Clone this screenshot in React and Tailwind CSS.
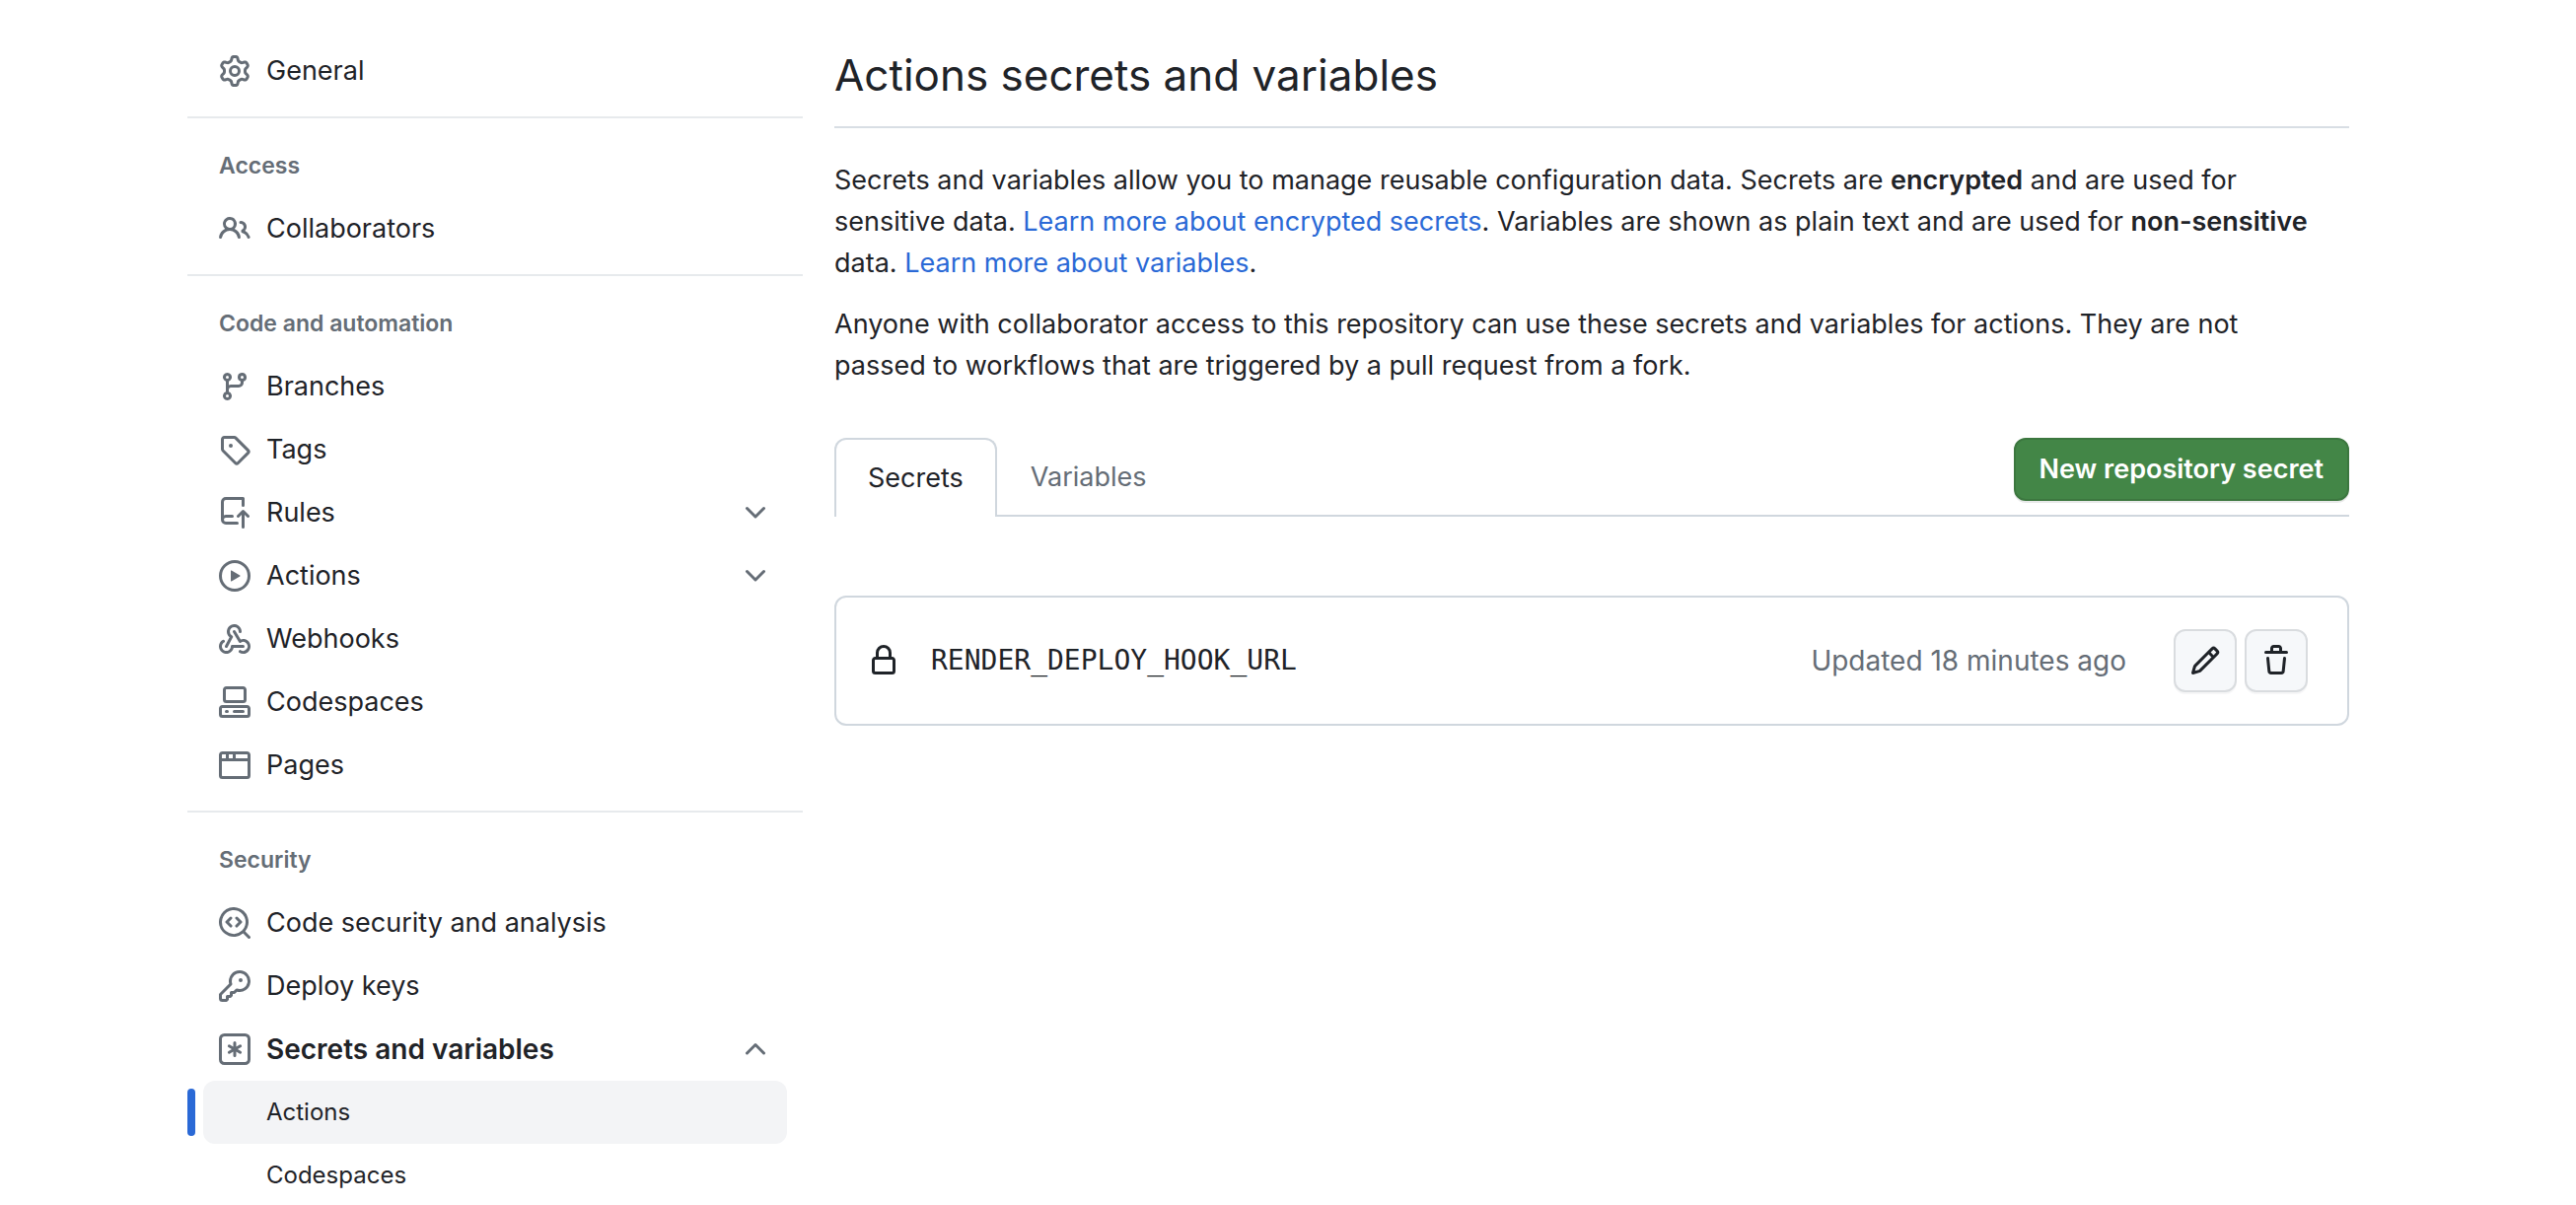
import React, { useState } from 'react';
import clsx from 'clsx';

const ICONS = {
    gear: 'M8 0a8.2 8.2 0 0 1 .701.031C9.444.095 9.99.645 10.16 1.29l.288 1.107c.018.066.079.158.212.224.231.114.454.243.668.386.123.082.233.09.299.071l1.103-.303c.644-.176 1.392.021 1.82.63.27.385.506.792.704 1.218.315.675.111 1.422-.364 1.891l-.814.806c-.049.048-.098.147-.088.294.016.257.016.515 0 .772-.01.147.038.246.088.294l.814.806c.475.469.679 1.216.364 1.891a7.977 7.977 0 0 1-.704 1.217c-.428.61-1.176.807-1.82.63l-1.102-.302c-.067-.019-.177-.011-.3.071a5.909 5.909 0 0 1-.668.386c-.133.066-.194.158-.211.224l-.29 1.106c-.168.646-.715 1.196-1.458 1.26a8.006 8.006 0 0 1-1.402 0c-.743-.064-1.289-.614-1.458-1.26l-.289-1.106c-.018-.066-.079-.158-.212-.224a5.738 5.738 0 0 1-.668-.386c-.123-.082-.233-.09-.299-.071l-1.103.303c-.644.176-1.392-.021-1.82-.63a8.12 8.12 0 0 1-.704-1.218c-.315-.675-.111-1.422.363-1.891l.815-.806c.05-.048.098-.147.088-.294a6.214 6.214 0 0 1 0-.772c.01-.147-.038-.246-.088-.294l-.815-.806C.635 6.045.431 5.298.746 4.623a7.92 7.92 0 0 1 .704-1.217c.428-.61 1.176-.807 1.82-.63l1.102.302c.067.019.177.011.3-.071.214-.143.437-.272.668-.386.133-.066.194-.158.211-.224l.29-1.106C6.009.645 6.556.095 7.299.03 7.53.01 7.764 0 8 0Zm-.571 1.525c-.036.003-.108.036-.137.146l-.289 1.105c-.147.561-.549.967-.998 1.189-.173.086-.34.183-.5.29-.417.278-.97.423-1.529.27l-1.103-.303c-.109-.03-.175.016-.195.045-.22.312-.412.644-.573.99-.014.031-.021.11.059.19l.815.806c.411.406.562.957.53 1.456a4.709 4.709 0 0 0 0 .582c.032.499-.119 1.05-.53 1.456l-.815.806c-.081.08-.073.159-.059.19.162.346.353.677.573.989.02.03.085.076.195.046l1.102-.303c.56-.153 1.113-.008 1.53.27.161.107.328.204.501.29.447.222.85.629.997 1.189l.289 1.105c.029.109.101.143.137.146a6.6 6.6 0 0 0 1.142 0c.036-.003.108-.036.137-.146l.289-1.105c.147-.561.549-.967.998-1.189.173-.086.34-.183.5-.29.417-.278.97-.423 1.529-.27l1.103.303c.109.029.175-.016.195-.045.22-.313.411-.644.573-.99.014-.031.021-.11-.059-.19l-.815-.806c-.411-.406-.562-.957-.53-1.456a4.709 4.709 0 0 0 0-.582c-.032-.499.119-1.05.53-1.456l.815-.806c.081-.08.073-.159.059-.19a6.464 6.464 0 0 0-.573-.989c-.02-.03-.085-.076-.195-.046l-1.102.303c-.56.153-1.113.008-1.53-.27a4.44 4.44 0 0 0-.501-.29c-.447-.222-.85-.629-.997-1.189l-.289-1.105c-.029-.11-.101-.143-.137-.146a6.6 6.6 0 0 0-1.142 0ZM11 8a3 3 0 1 1-6 0 3 3 0 0 1 6 0ZM9.5 8a1.5 1.5 0 1 0-3.001.001A1.5 1.5 0 0 0 9.5 8Z',
    people: 'M2 5.5a3.5 3.5 0 1 1 5.898 2.549 5.508 5.508 0 0 1 3.034 4.084.75.75 0 1 1-1.482.235 4 4 0 0 0-7.9 0 .75.75 0 0 1-1.482-.236A5.507 5.507 0 0 1 3.102 8.05 3.493 3.493 0 0 1 2 5.5ZM11 4a3.001 3.001 0 0 1 2.22 5.018 5.01 5.01 0 0 1 2.56 3.012.749.749 0 0 1-.885.954.752.752 0 0 1-.549-.514 3.507 3.507 0 0 0-2.522-2.372.75.75 0 0 1-.574-.73v-.352a.75.75 0 0 1 .416-.672A1.5 1.5 0 0 0 11 5.5.75.75 0 0 1 11 4Zm-5.5-.5a2 2 0 1 0-.001 3.999A2 2 0 0 0 5.5 3.5Z',
    branch: 'M9.5 3.25a2.25 2.25 0 1 1 3 2.122V6A2.5 2.5 0 0 1 10 8.5H6a1 1 0 0 0-1 1v1.128a2.251 2.251 0 1 1-1.5 0V5.372a2.25 2.25 0 1 1 1.5 0v1.836A2.493 2.493 0 0 1 6 7h4a1 1 0 0 0 1-1v-.628A2.25 2.25 0 0 1 9.5 3.25Zm-6 0a.75.75 0 1 0 1.5 0 .75.75 0 0 0-1.5 0Zm8.25-.75a.75.75 0 1 0 0 1.5.75.75 0 0 0 0-1.5ZM4.25 12a.75.75 0 1 0 0 1.5.75.75 0 0 0 0-1.5Z',
    tag: 'M1 7.775V2.75C1 1.784 1.784 1 2.75 1h5.025c.464 0 .91.184 1.238.513l6.25 6.25a1.75 1.75 0 0 1 0 2.474l-5.026 5.026a1.75 1.75 0 0 1-2.474 0l-6.25-6.25A1.752 1.752 0 0 1 1 7.775Zm1.5 0c0 .066.026.13.073.177l6.25 6.25a.25.25 0 0 0 .354 0l5.025-5.025a.25.25 0 0 0 0-.354l-6.25-6.25a.25.25 0 0 0-.177-.073H2.75a.25.25 0 0 0-.25.25ZM6 5a1 1 0 1 1 0 2 1 1 0 0 1 0-2Z',
    repoPush: 'M1 2.5A2.5 2.5 0 0 1 3.5 0h8.75a.75.75 0 0 1 .75.75v3.5a.75.75 0 0 1-1.5 0V1.5h-8a1 1 0 0 0-1 1v6.708A2.493 2.493 0 0 1 3.5 9h3.25a.75.75 0 0 1 0 1.5H3.5a1 1 0 0 0 0 2h5.75a.75.75 0 0 1 0 1.5H3.5A2.5 2.5 0 0 1 1 11.5ZM11.5 9.06l-1.22 1.22a.75.75 0 0 1-1.06-1.06l2.5-2.5a.75.75 0 0 1 1.06 0l2.5 2.5a.75.75 0 0 1-1.06 1.06L13 9.06v6.19a.75.75 0 0 1-1.5 0Z',
    play: 'M8 0a8 8 0 1 1 0 16A8 8 0 0 1 8 0ZM1.5 8a6.5 6.5 0 1 0 13 0 6.5 6.5 0 0 0-13 0Zm4.879-2.773 4.264 2.559a.25.25 0 0 1 0 .428l-4.264 2.559A.25.25 0 0 1 6 10.559V5.442a.25.25 0 0 1 .379-.215Z',
    webhook: 'M5.5 4.25a2.25 2.25 0 0 1 4.5 0 .75.75 0 0 0 1.5 0 3.75 3.75 0 1 0-6.14 2.889l-2.272 4.258a.75.75 0 0 0 1.324.706L7 7.25a.75.75 0 0 0-.309-1.015A2.25 2.25 0 0 1 5.5 4.25ZM7.364 3.607a.75.75 0 0 1 1.03.257l2.608 4.349a3.75 3.75 0 1 1-.628 6.785.75.75 0 0 1 .752-1.299 2.25 2.25 0 1 0-.033-3.88.75.75 0 0 1-1.03-.256L7.107 4.636a.75.75 0 0 1 .257-1.03ZM2.9 8.776A.75.75 0 0 1 2.625 9.8 2.25 2.25 0 1 0 6 11.75a.75.75 0 0 1 .75-.751h5.5a.75.75 0 0 1 0 1.5H7.425a3.751 3.751 0 1 1-5.55-3.998.75.75 0 0 1 1.024.274Z',
    codespaces: 'M0 11.25c0-.966.784-1.75 1.75-1.75h12.5c.966 0 1.75.784 1.75 1.75v3A1.75 1.75 0 0 1 14.25 16H1.75A1.75 1.75 0 0 1 0 14.25Zm2-9.5C2 .784 2.784 0 3.75 0h8.5C13.216 0 14 .784 14 1.75v5a1.75 1.75 0 0 1-1.75 1.75h-8.5A1.75 1.75 0 0 1 2 6.75Zm1.75-.25a.25.25 0 0 0-.25.25v5c0 .138.112.25.25.25h8.5a.25.25 0 0 0 .25-.25v-5a.25.25 0 0 0-.25-.25Zm-2 9.5a.25.25 0 0 0-.25.25v3c0 .138.112.25.25.25h12.5a.25.25 0 0 0 .25-.25v-3a.25.25 0 0 0-.25-.25ZM7 12.75a.75.75 0 0 1 .75-.75h4.5a.75.75 0 0 1 0 1.5h-4.5a.75.75 0 0 1-.75-.75Zm-4 0a.75.75 0 0 1 .75-.75h.5a.75.75 0 0 1 0 1.5h-.5a.75.75 0 0 1-.75-.75Z',
    browser: 'M0 2.75C0 1.784.784 1 1.75 1h12.5c.966 0 1.75.784 1.75 1.75v10.5A1.75 1.75 0 0 1 14.25 15H1.75A1.75 1.75 0 0 1 0 13.25ZM14.5 6h-13v7.25c0 .138.112.25.25.25h12.5a.25.25 0 0 0 .25-.25Zm-6-3.5v2h6V2.75a.25.25 0 0 0-.25-.25ZM5 2.5v2h2v-2Zm-3.25 0a.25.25 0 0 0-.25.25V4.5h2v-2Z',
    codescan: 'M8.47 4.97a.75.75 0 0 0 0 1.06L9.94 7.5 8.47 8.97a.75.75 0 1 0 1.06 1.06l2-2a.75.75 0 0 0 0-1.06l-2-2a.75.75 0 0 0-1.06 0ZM6.53 6.03a.75.75 0 0 0-1.06-1.06l-2 2a.75.75 0 0 0 0 1.06l2 2a.75.75 0 1 0 1.06-1.06L5.06 7.5l1.47-1.47ZM12.246 13.307a7.501 7.501 0 1 1 1.06-1.06l2.474 2.473a.749.749 0 1 1-1.06 1.06ZM1.5 7.5a6.002 6.002 0 0 0 3.608 5.504 6.002 6.002 0 0 0 6.486-1.117.748.748 0 0 1 .292-.293A6 6 0 1 0 1.5 7.5Z',
    key: 'M10.5 0a5.499 5.499 0 1 1-1.288 10.848l-.932.932a.749.749 0 0 1-.53.22H7v.75a.749.749 0 0 1-.22.53l-.5.5a.749.749 0 0 1-.53.22H5v.75a.749.749 0 0 1-.22.53l-.5.5a.749.749 0 0 1-.53.22h-2A1.75 1.75 0 0 1 0 14.25v-2c0-.199.079-.389.22-.53l4.932-4.932A5.5 5.5 0 0 1 10.5 0Zm-4 5.5c-.001.431.069.86.205 1.269a.75.75 0 0 1-.181.768L1.5 12.56v1.69c0 .138.112.25.25.25h1.69l.06-.06v-1.19a.75.75 0 0 1 .75-.75h1.19l.06-.06v-1.19a.75.75 0 0 1 .75-.75h1.19l1.023-1.025a.75.75 0 0 1 .768-.18A4 4 0 1 0 6.5 5.5ZM11 6a1 1 0 1 1 0-2 1 1 0 0 1 0 2Z',
    asterisk: 'M0 2.75A2.75 2.75 0 0 1 2.75 0h10.5A2.75 2.75 0 0 1 16 2.75v10.5A2.75 2.75 0 0 1 13.25 16H2.75A2.75 2.75 0 0 1 0 13.25ZM2.75 1.5c-.69 0-1.25.56-1.25 1.25v10.5c0 .69.56 1.25 1.25 1.25h10.5c.69 0 1.25-.56 1.25-1.25V2.75c0-.69-.56-1.25-1.25-1.25ZM8 4a.75.75 0 0 1 .75.75V6.7l1.69-.975a.75.75 0 0 1 .75 1.3L9.5 8l1.69.976a.75.75 0 0 1-.75 1.298L8.75 9.3v1.951a.75.75 0 0 1-1.5 0V9.299l-1.69.976a.75.75 0 0 1-.75-1.3L6.5 8l-1.69-.975a.75.75 0 0 1 .75-1.3l1.69.976V4.75A.75.75 0 0 1 8 4Z',
    chevronDown: 'M12.78 5.22a.749.749 0 0 1 0 1.06l-4.25 4.25a.749.749 0 0 1-1.06 0L3.22 6.28a.749.749 0 1 1 1.06-1.06L8 8.939l3.72-3.719a.749.749 0 0 1 1.06 0Z',
    chevronUp: 'M3.22 10.53a.749.749 0 0 1 0-1.06l4.25-4.25a.749.749 0 0 1 1.06 0l4.25 4.25a.749.749 0 1 1-1.06 1.06L8 6.811 4.28 10.53a.749.749 0 0 1-1.06 0Z',
    lock: 'M4 4a4 4 0 0 1 8 0v2h.25c.966 0 1.75.784 1.75 1.75v5.5A1.75 1.75 0 0 1 12.25 15h-8.5A1.75 1.75 0 0 1 2 13.25v-5.5C2 6.784 2.784 6 3.75 6H4Zm8.25 3.5h-8.5a.25.25 0 0 0-.25.25v5.5c0 .138.112.25.25.25h8.5a.25.25 0 0 0 .25-.25v-5.5a.25.25 0 0 0-.25-.25ZM10.5 6V4a2.5 2.5 0 1 0-5 0v2Z',
    pencil: 'M11.013 1.427a1.75 1.75 0 0 1 2.474 0l1.086 1.086a1.75 1.75 0 0 1 0 2.474l-8.61 8.61c-.21.21-.47.364-.756.445l-3.251.93a.75.75 0 0 1-.927-.928l.929-3.25c.081-.286.235-.547.445-.758l8.61-8.61Zm.176 4.823L9.75 4.81l-6.286 6.287a.253.253 0 0 0-.064.108l-.558 1.953 1.953-.558a.253.253 0 0 0 .108-.064Zm1.238-3.763a.25.25 0 0 0-.354 0L10.811 3.75l1.439 1.44 1.263-1.263a.25.25 0 0 0 0-.354Z',
    trash: 'M11 1.75V3h2.25a.75.75 0 0 1 0 1.5H2.75a.75.75 0 0 1 0-1.5H5V1.75C5 .784 5.784 0 6.75 0h2.5C10.216 0 11 .784 11 1.75ZM4.496 6.675l.66 6.6a.25.25 0 0 0 .249.225h5.19a.25.25 0 0 0 .249-.225l.66-6.6a.75.75 0 0 1 1.492.149l-.66 6.6A1.748 1.748 0 0 1 10.595 15h-5.19a1.75 1.75 0 0 1-1.741-1.575l-.66-6.6a.75.75 0 1 1 1.492-.15ZM6.5 1.75V3h3V1.75a.25.25 0 0 0-.25-.25h-2.5a.25.25 0 0 0-.25.25Z',
};

const SECTIONS = [
    { items: [{ icon: 'gear', label: 'General' }] },
    { title: 'Access', items: [{ icon: 'people', label: 'Collaborators' }] },
    {
        title: 'Code and automation',
        items: [
            { icon: 'branch', label: 'Branches' },
            { icon: 'tag', label: 'Tags' },
            { icon: 'repoPush', label: 'Rules', children: ['Rulesets'] },
            { icon: 'play', label: 'Actions', children: ['General', 'Runners'] },
            { icon: 'webhook', label: 'Webhooks' },
            { icon: 'codespaces', label: 'Codespaces' },
            { icon: 'browser', label: 'Pages' },
        ],
    },
    {
        title: 'Security',
        items: [
            { icon: 'codescan', label: 'Code security and analysis' },
            { icon: 'key', label: 'Deploy keys' },
            { icon: 'asterisk', label: 'Secrets and variables', children: ['Actions', 'Codespaces'], current: 'Actions' },
        ],
    },
];

const Icon = ({ name, className }) => (
    <svg viewBox="0 0 16 16" fill="currentColor" fillRule="evenodd" aria-hidden="true" className={clsx('size-8 shrink-0', className)}>
        <path d={ICONS[name]} />
    </svg>
);

const rowClass = 'flex h-16 w-full items-center gap-4 rounded-xl px-4 text-left';

const NavItem = ({ item }) => {
    const [open, setOpen] = useState(Boolean(item.current));

    if (!item.children) {
        return (
            <li className="px-4">
                <a href="#" className={rowClass}>
                    <Icon name={item.icon} className="text-[#656d76]" />
                    {item.label}
                </a>
            </li>
        );
    }

    return (
        <li>
            <div className="px-4">
                <button
                    type="button"
                    aria-expanded={open}
                    onClick={() => setOpen(!open)}
                    className={clsx(rowClass, item.current && 'text-[28px] font-semibold')}
                >
                    <Icon name={item.icon} className="text-[#656d76]" />
                    <span className="flex-1">{item.label}</span>
                    <Icon name={open ? 'chevronUp' : 'chevronDown'} className="text-[#656d76]" />
                </button>
            </div>
            {open && (
                <ul>
                    {item.children.map((child) => {
                        const active = child === item.current;
                        return (
                            <li key={child} className="relative px-4">
                                {active && <span className="absolute left-0 top-2 h-12 w-2 rounded-md bg-[#2a69d6]" />}
                                <a
                                    href="#"
                                    aria-current={active ? 'page' : undefined}
                                    className={clsx('flex h-16 items-center rounded-xl pl-16 text-2xl', active && 'bg-[#f3f4f6]')}
                                >
                                    {child}
                                </a>
                            </li>
                        );
                    })}
                </ul>
            )}
        </li>
    );
};

const Sidebar = () => (
    <nav aria-label="Repository settings" className="w-[624px] shrink-0">
        {SECTIONS.map((section, i) => (
            <section key={i} className={clsx(i > 0 && 'mt-3.5 border-t-2 border-[#e7eaed] pt-4')}>
                {section.title && (
                    <h2 className="flex h-16 items-center px-8 text-[23px] font-semibold text-[#656d76]">{section.title}</h2>
                )}
                <ul>
                    {section.items.map((item) => <NavItem key={item.label} item={item} />)}
                </ul>
            </section>
        ))}
    </nav>
);

const IconButton = ({ icon, label }) => (
    <button
        type="button"
        aria-label={label}
        className="flex size-16 items-center justify-center rounded-xl border-2 border-[#d9dcdf] bg-[#f6f8fa] shadow-[0_2px_0_rgba(31,35,40,0.04)]"
    >
        <Icon name={icon} />
    </button>
);

const App = () => (
    <div className="flex h-screen gap-8 overflow-hidden bg-white pl-[190px] pr-[230px] pt-10 font-['Inter','Liberation_Sans',sans-serif] text-[27px] leading-[42px] text-[#1f2328]">
        <Sidebar />

        <main className="min-w-0 flex-1">
            <h1 className="border-b-2 border-[#d8dee4] pb-4 text-[44px] leading-[72px]">Actions secrets and variables</h1>

            <div className="mt-8 space-y-5 pr-4">
                <p>
                    Secrets and variables allow you to manage reusable configuration data. Secrets are{' '}
                    <strong className="font-semibold">encrypted</strong> and are used for sensitive data.{' '}
                    <a href="#" className="text-[#2a69d6]">Learn more about encrypted secrets</a>. Variables are shown as
                    plain text and are used for <strong className="font-semibold">non-sensitive</strong> data.{' '}
                    <a href="#" className="text-[#2a69d6]">Learn more about variables</a>.
                </p>
                <p>
                    Anyone with collaborator access to this repository can use these secrets and variables for actions.
                    They are not passed to workflows that are triggered by a pull request from a fork.
                </p>
            </div>

            {/* Tabs */}
            <div className="mt-13 flex h-20 items-start justify-between border-b-2 border-[#d0d7de]">
                <div role="tablist" className="flex">
                    <button
                        type="button"
                        role="tab"
                        aria-selected="true"
                        className="h-20 rounded-t-xl border-2 border-b-0 border-[#d0d7de] bg-white px-8"
                    >
                        Secrets
                    </button>
                    <button type="button" role="tab" aria-selected="false" className="h-20 border-2 border-transparent px-8 text-[#656d76]">
                        Variables
                    </button>
                </div>
                <button
                    type="button"
                    className="h-16 rounded-xl border-2 border-[#3c773f] bg-[#438647] px-6 font-semibold text-white shadow-[0_2px_0_rgba(31,35,40,0.1)]"
                >
                    New repository secret
                </button>
            </div>

            {/* Secrets list */}
            <ul className="mt-20 rounded-xl border-2 border-[#d0d7de]">
                <li className="flex items-center py-8 pl-8 pr-10 text-[28px]">
                    <Icon name="lock" />
                    <code className="ml-8 font-['DejaVu_Sans_Mono',monospace]">RENDER_DEPLOY_HOOK_URL</code>
                    <span className="ml-auto mr-12 text-[#656d76]">Updated 18 minutes ago</span>
                    <div className="flex gap-2">
                        <IconButton icon="pencil" label="Edit secret" />
                        <IconButton icon="trash" label="Delete secret" />
                    </div>
                </li>
            </ul>
        </main>
    </div>
);

export default App;
